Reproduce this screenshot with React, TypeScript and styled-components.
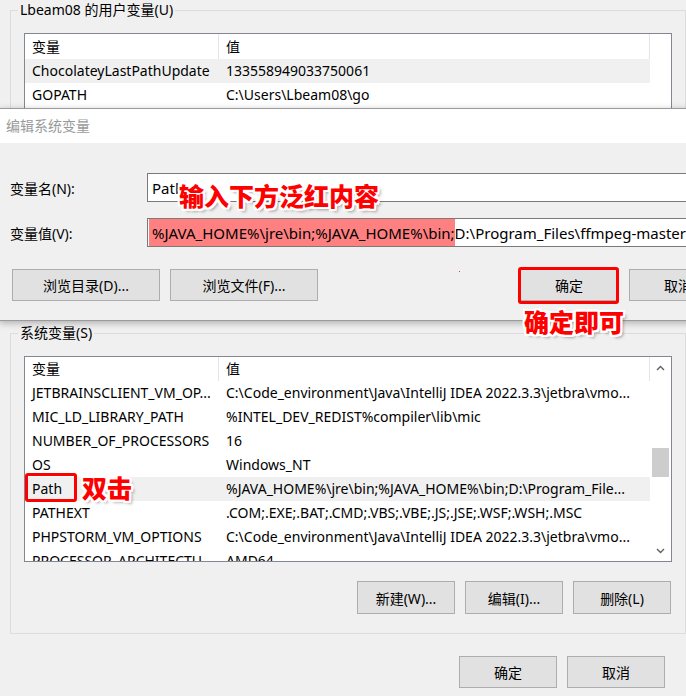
import React from 'react';
import styled, { createGlobalStyle } from 'styled-components';

const GlobalStyle = createGlobalStyle`
  html, body { margin: 0; padding: 0; background: #f0f0f0; }
  body {
    font-family: "Noto Sans", "Noto Sans CJK SC", sans-serif;
    font-size: 14px;
    color: #000;
  }
  * { box-sizing: border-box; }
`;

const Window = styled.div`
  position: relative;
  width: 686px;
  height: 696px;
  overflow: hidden;
  background: #f0f0f0;
`;

const BackPane = styled.div`
  display: flex;
  flex-direction: column;
  padding-left: 10px;
`;

const GroupBox = styled.fieldset<{ $mt: number; $pb: number }>`
  margin: ${(p) => p.$mt}px 0 0 0;
  width: 676px;
  min-width: 0;
  border: 1px solid #dcdcdc;
  padding: 13px 13px ${(p) => p.$pb}px 13px;
`;

const Legend = styled.legend`
  margin-left: -6px;
  padding: 0 2px;
  line-height: 20px;
  font-size: 14px;
  color: #000;
`;

const ListBox = styled.div<{ $h: number }>`
  height: ${(p) => p.$h}px;
  border: 1px solid #828790;
  background: #fff;
  display: flex;
  overflow: hidden;
`;

const Columns = styled.div`
  flex: 1;
  min-width: 0;
  display: flex;
  flex-direction: column;
`;

const Row = styled.div<{ $sel?: boolean; $head?: boolean; $h?: number }>`
  display: grid;
  grid-template-columns: 194px 1fr;
  height: ${(p) => p.$h ?? 24}px;
  line-height: ${(p) => p.$h ?? 24}px;
  flex-shrink: 0;
  background: ${(p) => (p.$sel ? '#f0f0f0' : '#fff')};
  border-right: ${(p) => (p.$head ? '1px solid #e5e5e5' : 'none')};
`;

const Cell = styled.div<{ $divider?: boolean }>`
  padding-left: 7px;
  white-space: nowrap;
  overflow: hidden;
  border-right: ${(p) => (p.$divider ? '1px solid #e5e5e5' : 'none')};
`;

const ScrollBar = styled.div`
  width: 21px;
  flex-shrink: 0;
  display: flex;
  flex-direction: column;
  align-items: center;
  background: #fff;
`;

const ArrowBox = styled.div`
  width: 21px;
  height: 21px;
  display: flex;
  align-items: center;
  justify-content: center;
  flex-shrink: 0;
`;

const Track = styled.div`
  flex: 1;
  width: 100%;
  padding: 0 2px;
`;

const Thumb = styled.div`
  width: 17px;
  height: 29px;
  background: #cdcdcd;
`;

const ButtonRow = styled.div<{ $mt: number; $pr: number; $gap: number }>`
  display: flex;
  justify-content: flex-end;
  gap: ${(p) => p.$gap}px;
  margin-top: ${(p) => p.$mt}px;
  padding-right: ${(p) => p.$pr}px;
`;

const Button = styled.button<{ $w: number; $h?: number }>`
  width: ${(p) => p.$w}px;
  height: ${(p) => p.$h ?? 32}px;
  background: #e1e1e1;
  border: 1px solid #adadad;
  border-radius: 0;
  padding: 0;
  font-family: inherit;
  font-size: 14px;
  color: #000;
  flex-shrink: 0;
`;

/* ---- dialog (lies over the main window) ---- */

const Dialog = styled.div`
  position: absolute;
  top: 108px;
  left: -1px;
  width: 741px;
  border: 1px solid #9a9a9a;
  background: #f0f0f0;
  box-shadow: 0 2px 7px rgba(0, 0, 0, 0.28);
`;

const TitleBar = styled.div`
  height: 34px;
  background: #fff;
  color: #9a9a9a;
  line-height: 34px;
  padding-left: 6px;
  font-size: 14px;
`;

const DialogBody = styled.div`
  padding: 30px 12px 19px 10px;
  display: flex;
  flex-direction: column;
`;

const FieldRow = styled.div<{ $mt: number }>`
  display: flex;
  align-items: center;
  margin-top: ${(p) => p.$mt}px;
`;

const FieldLabel = styled.div`
  width: 137px;
  flex-shrink: 0;
`;

const Input = styled.div`
  flex: 1;
  height: 29px;
  border: 1px solid #7a7a7a;
  background: #fff;
  padding-left: 1px;
  display: flex;
  align-items: stretch;
  white-space: nowrap;
  overflow: hidden;
  font-size: 15px;
`;

const InputText = styled.span<{ $hl?: boolean; $lead?: boolean }>`
  display: flex;
  align-items: center;
  padding-left: ${(p) => (p.$lead ? 3 : 0)}px;
  background: ${(p) => (p.$hl ? '#ff8080' : 'transparent')};
`;

const DialogButtons = styled.div`
  display: flex;
  gap: 10px;
  margin-top: 22px;
  padding-left: 2px;
`;

const OkGroup = styled.div`
  margin-left: auto;
  display: flex;
  gap: 11px;
`;

/* ---- annotations ---- */

const RedBox = styled.div<{ $x: number; $y: number; $w: number; $h: number }>`
  position: absolute;
  left: ${(p) => p.$x}px;
  top: ${(p) => p.$y}px;
  width: ${(p) => p.$w}px;
  height: ${(p) => p.$h}px;
  border: 3px solid #ff0000;
  border-radius: 3px;
`;

const Note = styled.div<{ $x: number; $y: number }>`
  position: absolute;
  left: ${(p) => p.$x}px;
  top: ${(p) => p.$y}px;
  font-family: "Noto Sans CJK SC", sans-serif;
  font-weight: 900;
  font-size: 25px;
  line-height: 1;
  color: #ff0000;
  white-space: nowrap;
  text-shadow:
    2px 0 0 #fff, -2px 0 0 #fff, 0 2px 0 #fff, 0 -2px 0 #fff,
    2px 2px 0 #fff, -2px -2px 0 #fff, 2px -2px 0 #fff, -2px 2px 0 #fff,
    3px 3px 3px rgba(0, 0, 0, 0.35);
`;

const Dot = styled.div`
  position: absolute;
  left: 459px;
  top: 271px;
  width: 1px;
  height: 1px;
  background: #e04040;
`;

const Chevron = ({ up }: { up?: boolean }) => (
  <svg width="9" height="6" viewBox="0 0 9 6">
    <path
      d={up ? 'M1 5 L4.5 1.5 L8 5' : 'M1 1 L4.5 4.5 L8 1'}
      fill="none"
      stroke="#606060"
      strokeWidth="1.4"
    />
  </svg>
);

const userVars: [string, string][] = [
  ['ChocolateyLastPathUpdate', '133558949033750061'],
  ['GOPATH', 'C:\\Users\\Lbeam08\\go'],
  ['OneDrive', 'C:\\Users\\Lbeam08\\OneDrive'],
  ['Path', 'C:\\Users\\Lbeam08\\AppData\\Local\\Microsoft\\WindowsApps'],
  ['TEMP', 'C:\\Users\\Lbeam08\\AppData\\Local\\Temp'],
  ['TMP', 'C:\\Users\\Lbeam08\\AppData\\Local\\Temp'],
];

const sysVars: [string, string][] = [
  ['JETBRAINSCLIENT_VM_OP...', 'C:\\Code_environment\\Java\\IntelliJ IDEA 2022.3.3\\jetbra\\vmo...'],
  ['MIC_LD_LIBRARY_PATH', '%INTEL_DEV_REDIST%compiler\\lib\\mic'],
  ['NUMBER_OF_PROCESSORS', '16'],
  ['OS', 'Windows_NT'],
  ['Path', '%JAVA_HOME%\\jre\\bin;%JAVA_HOME%\\bin;D:\\Program_File...'],
  ['PATHEXT', '.COM;.EXE;.BAT;.CMD;.VBS;.VBE;.JS;.JSE;.WSF;.WSH;.MSC'],
  ['PHPSTORM_VM_OPTIONS', 'C:\\Code_environment\\Java\\IntelliJ IDEA 2022.3.3\\jetbra\\vmo...'],
  ['PROCESSOR_ARCHITECTU...', 'AMD64'],
];

export default function App() {
  return (
    <>
      <GlobalStyle />
      <Window>
        <BackPane>
          <GroupBox $mt={0} $pb={20}>
            <Legend>Lbeam08 的用户变量(U)</Legend>
            <ListBox $h={250}>
              <Columns>
                <Row $head $h={25}>
                  <Cell $divider>变量</Cell>
                  <Cell>值</Cell>
                </Row>
                {userVars.map(([k, v], i) => (
                  <Row key={k} $sel={i === 0}>
                    <Cell>{k}</Cell>
                    <Cell>{v}</Cell>
                  </Row>
                ))}
              </Columns>
              <ScrollBar />
            </ListBox>
          </GroupBox>

          <GroupBox $mt={19} $pb={19}>
            <Legend>系统变量(S)</Legend>
            <ListBox $h={206}>
              <Columns>
                <Row $head>
                  <Cell $divider>变量</Cell>
                  <Cell>值</Cell>
                </Row>
                {sysVars.map(([k, v]) => (
                  <Row key={k} $sel={k === 'Path'}>
                    <Cell>{k}</Cell>
                    <Cell>{v}</Cell>
                  </Row>
                ))}
              </Columns>
              <ScrollBar>
                <ArrowBox>
                  <Chevron up />
                </ArrowBox>
                <Track>
                  <Thumb style={{ marginTop: 70 }} />
                </Track>
                <ArrowBox>
                  <Chevron />
                </ArrowBox>
              </ScrollBar>
            </ListBox>
            <ButtonRow $mt={19} $pr={1} $gap={10}>
              <Button $w={98} $h={33}>新建(W)...</Button>
              <Button $w={98} $h={33}>编辑(I)...</Button>
              <Button $w={98} $h={33}>删除(L)</Button>
            </ButtonRow>
          </GroupBox>

          <ButtonRow $mt={22} $pr={21} $gap={10}>
            <Button $w={98}>确定</Button>
            <Button $w={98}>取消</Button>
          </ButtonRow>
        </BackPane>

        <Dialog>
          <TitleBar>编辑系统变量</TitleBar>
          <DialogBody>
            <FieldRow $mt={0}>
              <FieldLabel>变量名(N):</FieldLabel>
              <Input>
                <InputText $lead>Path</InputText>
              </Input>
            </FieldRow>
            <FieldRow $mt={16}>
              <FieldLabel>变量值(V):</FieldLabel>
              <Input>
                <InputText $hl $lead>%JAVA_HOME%\jre\bin;%JAVA_HOME%\bin;</InputText>
                <InputText>D:\Program_Files\ffmpeg-master-latest-win64-gpl\bin;</InputText>
              </Input>
            </FieldRow>
            <DialogButtons>
              <Button $w={148}>浏览目录(D)...</Button>
              <Button $w={148}>浏览文件(F)...</Button>
              <OkGroup>
                <Button $w={98}>确定</Button>
                <Button $w={98}>取消</Button>
              </OkGroup>
            </DialogButtons>
          </DialogBody>
        </Dialog>

        <Dot />
        <RedBox $x={518} $y={267} $w={101} $h={37} />
        <RedBox $x={25} $y={473} $w={52} $h={29} />
        <Note $x={179} $y={183}>输入下方泛红内容</Note>
        <Note $x={524} $y={309}>确定即可</Note>
        <Note $x={82} $y={475}>双击</Note>
      </Window>
    </>
  );
}
